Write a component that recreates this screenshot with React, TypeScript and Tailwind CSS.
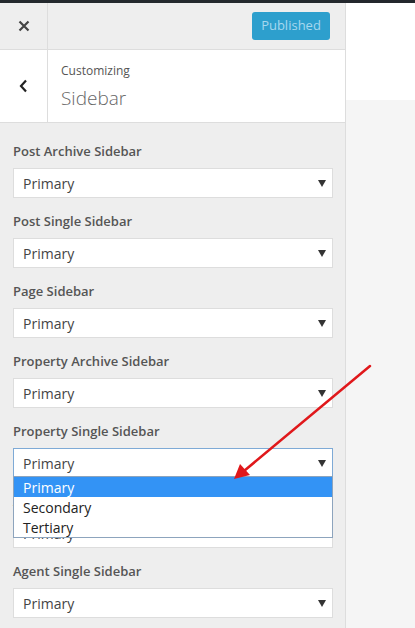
const fields = [
  "Post Archive Sidebar",
  "Post Single Sidebar",
  "Page Sidebar",
  "Property Archive Sidebar",
  "Property Single Sidebar",
  "Agent Archive Sidebar",
  "Agent Single Sidebar",
]

const Caret = () => (
  <svg width="8" height="7" viewBox="0 0 8 7" className="ml-auto mr-[6px]">
    <path d="M0 0 L8 0 L4 7 Z" fill="#333" />
  </svg>
)

const Select = ({ open = false }: { open?: boolean }) => (
  <div className="relative w-[320px] shrink-0">
    <div
      className={`flex h-[30px] items-center border bg-white pl-[9px] text-[14px] text-[#444] ${
        open ? "border-[#7eaad6]" : "border-[#ddd]"
      }`}
    >
      <span>Primary</span>
      <Caret />
    </div>
    {open && (
      <div className="absolute left-0 top-[28px] z-10 w-[320px] border border-[#8da4bd] bg-white text-[14px] text-[#222]">
        <div className="flex h-[20px] items-center bg-[#3393f5] pl-[9px] text-white">Primary</div>
        <div className="flex h-[20px] items-center pl-[9px]">Secondary</div>
        <div className="flex h-[20px] items-center pl-[9px]">Tertiary</div>
      </div>
    )}
  </div>
)

export default function App() {
  return (
    <div
      className="relative flex h-[628px] w-[415px] flex-col overflow-hidden bg-[#f5f5f5]"
      style={{ fontFamily: '"Open Sans", "Noto Sans", sans-serif' }}
    >
      <div className="h-[3px] shrink-0 bg-[#23282d]" />
      <div className="flex min-h-0 flex-1">
        {/* customizer panel */}
        <div className="flex w-[346px] shrink-0 flex-col overflow-hidden border-r border-[#ddd] bg-[#eee]">
          <div className="flex h-[47px] shrink-0 items-center border-b border-[#ddd]">
            <div className="flex h-full w-[48px] items-center justify-center border-r border-[#ddd]">
              <svg width="12" height="12" viewBox="0 0 12 12">
                <path d="M1.5 1.5 L10.5 10.5 M10.5 1.5 L1.5 10.5" stroke="#444" strokeWidth="2.2" />
              </svg>
            </div>
            <div className="ml-auto mr-[15px] flex h-[28px] w-[78px] items-center justify-center rounded-[3px] bg-[#2d9fcd] text-[13px] text-[#a7d8ef]">
              Published
            </div>
          </div>
          <div className="flex h-[73px] shrink-0 border-b border-[#ddd] bg-white">
            <div className="flex h-full w-[48px] items-center justify-center border-r border-[#ddd]">
              <svg width="9" height="14" viewBox="0 0 9 14">
                <path d="M7 1.5 L2 7 L7 12.5" stroke="#222" strokeWidth="2.2" fill="none" />
              </svg>
            </div>
            <div className="flex flex-col pl-[13px] pt-[12px] text-[#555]">
              <span className="text-[12px] leading-[18px]">Customizing</span>
              <span className="mt-[5px] text-[19px] font-light leading-[26px] text-[#666]">Sidebar</span>
            </div>
          </div>
          <div className="flex flex-col px-[13px] pt-[18px]">
            {fields.map((f, i) => (
              <div key={f} className="mb-[13px] flex shrink-0 flex-col">
                <div className="mb-[7px] h-[20px] text-[13px] font-semibold leading-[20px] text-[#555]">{f}</div>
                <Select open={i === 4} />
              </div>
            ))}
          </div>
        </div>
        {/* preview area */}
        <div className="flex flex-1 flex-col">
          <div className="h-[97px] shrink-0 bg-white" />
          <div className="flex-1 bg-[#f5f5f5]" />
        </div>
      </div>

      {/* annotation arrow */}
      <svg className="pointer-events-none absolute left-0 top-0 z-20" width="415" height="628">
        <line x1="370" y1="366" x2="244" y2="471" stroke="#e0181b" strokeWidth="2.5" strokeLinecap="round" />
        <path d="M234 479 L240 464 L250 475 Z" fill="#e0181b" />
      </svg>
    </div>
  )
}
